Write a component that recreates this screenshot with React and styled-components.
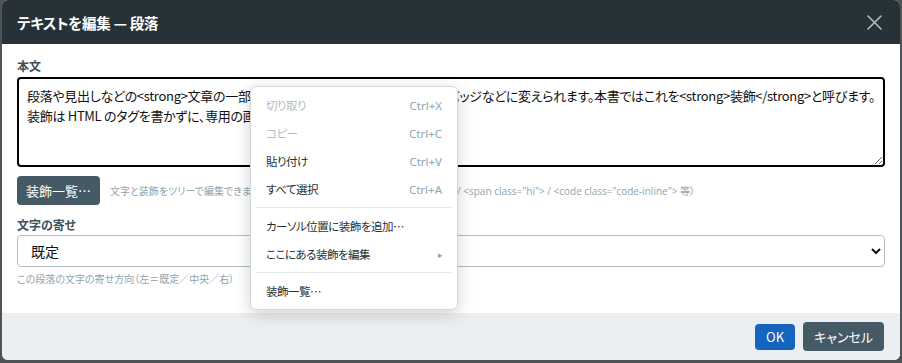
import React from 'react';
import styled, {createGlobalStyle} from 'styled-components';

const GlobalStyle = createGlobalStyle`
  html, body {
    margin: 0;
    padding: 0;
    background: #4f5356;
    overflow: hidden;
  }
  body {
    font-family: "Noto Sans CJK JP", "Noto Sans", sans-serif;
    font-feature-settings: "palt";
  }
`;

const Dialog = styled.div`
  position: relative;
  margin: 0 2px 0 2px;
  height: 360px;
  background: #fff;
  border-radius: 6px;
  overflow: hidden;
  display: flex;
  flex-direction: column;
`;

const Header = styled.div`
  height: 44px;
  flex: none;
  background: #263238;
  display: flex;
  align-items: center;
  justify-content: space-between;
  padding: 0 18px 0 15px;
`;

const Title = styled.h2`
  margin: 0;
  color: #fff;
  font-size: 14.5px;
  font-weight: 700;
  letter-spacing: -0.2px;
`;

const CloseButton = styled.button`
  border: none;
  background: none;
  padding: 0;
  width: 16px;
  height: 16px;
  display: flex;
  align-items: center;
  justify-content: center;
  color: #b0bec5;
`;

const Body = styled.div`
  flex: 1;
  padding: 14px 15px 0 15px;
  display: flex;
  flex-direction: column;
`;

const Label = styled.label`
  font-size: 12px;
  font-weight: 700;
  color: #3f525c;
  line-height: 16px;
  margin-bottom: ${p => p.gap || 3}px;
`;

const TextArea = styled.textarea`
  box-sizing: border-box;
  width: 100%;
  height: 90px;
  border: 2px solid #000;
  border-radius: 4px;
  padding: 7px 8px;
  font-family: inherit;
  font-feature-settings: "palt";
  font-size: 13px;
  letter-spacing: -0.3px;
  line-height: 20px;
  color: #111;
  white-space: pre;
  overflow: hidden;
  resize: vertical;
  outline: none;
`;

const ToolRow = styled.div`
  display: flex;
  align-items: center;
  gap: 10px;
  margin-top: 9px;
  white-space: nowrap;
`;

const Button = styled.button`
  border: none;
  border-radius: 4px;
  background: ${p => p.primary ? '#1565c0' : '#455a64'};
  color: #fff;
  font-family: inherit;
  font-feature-settings: "palt";
  font-size: 13px;
  height: ${p => p.primary ? 26 : 29}px;
  padding: 0 ${p => p.pad || 11}px;
`;

const Hint = styled.span`
  font-family: "Open Sans", "Noto Sans CJK JP", sans-serif;
  font-size: 10px;
  color: #90a4ae;
  margin-top: ${p => p.top || 0}px;
`;

const Field = styled.div`
  display: flex;
  flex-direction: column;
  margin-top: 12px;
`;

const Select = styled.select`
  box-sizing: border-box;
  width: 100%;
  height: 32px;
  border: 1px solid #b0bec5;
  border-radius: 4px;
  background: #fff;
  padding: 0 9px;
  font-family: inherit;
  font-feature-settings: "palt";
  font-size: 14px;
  color: #111;
`;

const Footer = styled.div`
  height: 47px;
  flex: none;
  background: #eceff1;
  display: flex;
  align-items: center;
  justify-content: flex-end;
  gap: 8px;
  padding: 0 16px 0 0;
`;

const Menu = styled.div`
  position: absolute;
  left: 248px;
  top: 86px;
  width: 208px;
  box-sizing: border-box;
  background: #fff;
  border: 1px solid #cfd8dc;
  border-radius: 6px;
  box-shadow: 0 4px 16px rgba(0, 0, 0, 0.18);
  padding: 4px 0;
`;

const MenuItem = styled.div`
  height: 28px;
  display: flex;
  align-items: center;
  justify-content: space-between;
  padding: 0 15px;
  font-size: 11.5px;
  letter-spacing: -0.5px;
  color: ${p => p.disabled ? '#b0bec5' : '#263238'};
`;

const Shortcut = styled.span`
  font-family: "Noto Sans", sans-serif;
  font-size: 11.5px;
  letter-spacing: 0;
  color: #90a4ae;
`;

const Arrow = styled.span`
  font-size: 9px;
  color: #90a4ae;
`;

const Separator = styled.div`
  height: 1px;
  background: #e3e8eb;
  margin: 4px 4px;
`;

const bodyText =
  '段落や見出しなどの<strong>文章の一部</strong>を太字や色付きの文字に、バッジなどに変えられます。本書ではこれを<strong>装飾</strong>と呼びます。\n' +
  '装飾は HTML のタグを書かずに、専用の画面から付けたり外したりできます。';

const menuItems = [
  {label: '切り取り', key: 'Ctrl+X', disabled: true},
  {label: 'コピー', key: 'Ctrl+C', disabled: true},
  {label: '貼り付け', key: 'Ctrl+V'},
  {label: 'すべて選択', key: 'Ctrl+A'},
  {sep: true},
  {label: 'カーソル位置に装飾を追加…'},
  {label: 'ここにある装飾を編集', sub: true},
  {sep: true},
  {label: '装飾一覧…'},
];

export default function App() {
  return (
    <>
      <GlobalStyle />
      <Dialog>
        <Header>
          <Title>テキストを編集 — 段落</Title>
          <CloseButton aria-label="閉じる">
            <svg width="15" height="15" viewBox="0 0 15 15">
              <path d="M1 1L14 14M14 1L1 14" stroke="currentColor" strokeWidth="1.6" strokeLinecap="round" />
            </svg>
          </CloseButton>
        </Header>

        <Body>
          <Label>本文</Label>
          <TextArea defaultValue={bodyText} spellCheck={false} />
          <ToolRow>
            <Button pad={9}>装飾一覧…</Button>
            <Hint>文字と装飾をツリーで編集できます。（&lt;strong&gt; / &lt;em&gt; / &lt;del&gt; / &lt;a href&gt; / &lt;b&gt; / &lt;span class="hi"&gt; / &lt;code class="code-inline"&gt; 等）</Hint>
          </ToolRow>

          <Field>
            <Label gap={2}>文字の寄せ</Label>
            <Select defaultValue="default">
              <option value="default">既定</option>
              <option value="center">中央</option>
              <option value="right">右</option>
            </Select>
            <Hint top={4}>この段落の文字の寄せ方向（左＝既定／中央／右）</Hint>
          </Field>
        </Body>

        <Footer>
          <Button primary>OK</Button>
          <Button>キャンセル</Button>
        </Footer>

        <Menu>
          {menuItems.map((m, i) => m.sep ? <Separator key={i} /> : (
            <MenuItem key={i} disabled={m.disabled}>
              <span>{m.label}</span>
              {m.key && <Shortcut>{m.key}</Shortcut>}
              {m.sub && <Arrow>▸</Arrow>}
            </MenuItem>
          ))}
        </Menu>
      </Dialog>
    </>
  );
}
